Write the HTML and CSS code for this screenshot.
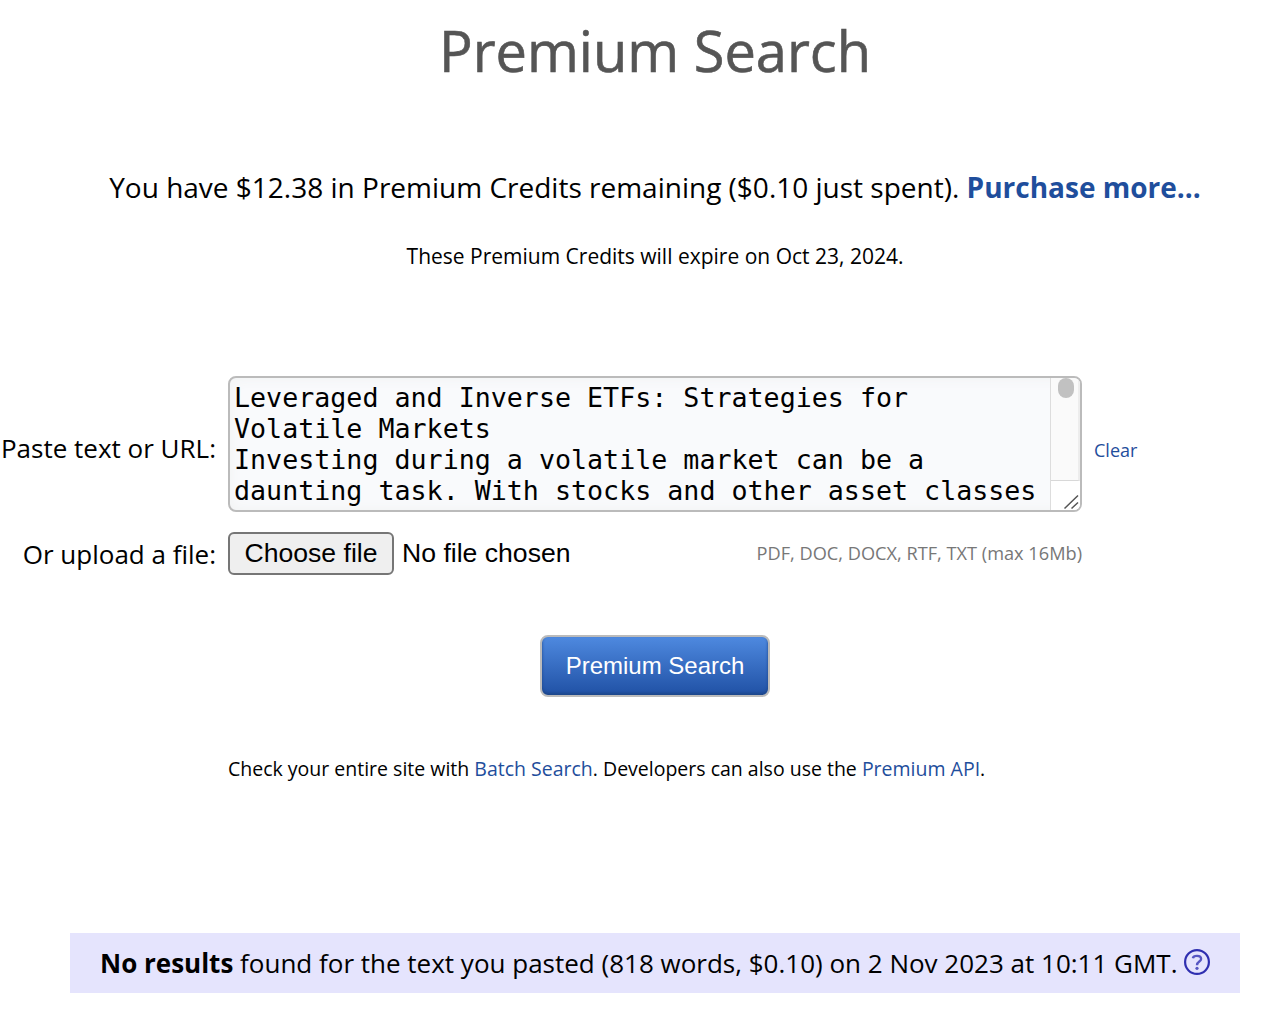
FILE: index.html
```html
<!DOCTYPE html>
<html lang="en">
<head>
<meta charset="utf-8">
<title>Premium Search</title>
<link rel="stylesheet" href="styles.css">
</head>
<body>
<main class="page">
  <h1 class="title"><span>Premium Search</span></h1>
  <p class="credits"><span>You have $12.38 in Premium Credits remaining ($0.10 just spent). <a class="more" href="#">Purchase more...</a></span></p>
  <p class="expiry"><span>These Premium Credits will expire on Oct 23, 2024.</span></p>
  <form class="form">
    <div class="label paste-label">Paste text or URL:</div>
    <div class="textbox">
      <div class="text">Leveraged and Inverse ETFs: Strategies for<br>Volatile Markets<br>Investing during a volatile market can be a<br>daunting task. With stocks and other asset classes</div>
      <div class="scroll">
        <div class="track"><div class="thumb"></div></div>
        <svg class="grip" width="29" height="29" viewBox="0 0 29 29"><path d="M13.5 27.500L27 14.500M20.500 27.500L27 21.500" fill="none" stroke="#555" stroke-width="1.500"/></svg>
      </div>
    </div>
    <a class="clear" href="#">Clear</a>
    <div class="label">Or upload a file:</div>
    <div class="upload">
      <button type="button" class="choose">Choose file</button>
      <span class="filename">No file chosen</span>
      <span class="formats">PDF, DOC, DOCX, RTF, TXT (max 16Mb)</span>
    </div>
  </form>
  <button type="button" class="search">Premium Search</button>
  <p class="hint">Check your entire site with <a href="#">Batch Search</a>. Developers can also use the <a href="#">Premium API</a>.</p>
  <div class="result">
    <span><b>No results</b> found for the text you pasted (818 words, $0.10) on 2 Nov 2023 at 10:11 GMT.</span>
    <svg class="help" width="26" height="26" viewBox="0 0 26 26" fill="none"><circle cx="13" cy="13" r="11.900" stroke="#2f2fb0" stroke-width="2.200"/><path d="M8.900 9.200C9.200 7.600 10.700 6.900 13 6.900C15.600 6.900 17.100 8 17.100 10C17.100 12.700 13 12.500 13 16.200" stroke="#5656c2" stroke-width="2.400"/><circle cx="13" cy="19.300" r="1.600" fill="#5656c2"/></svg>
  </div>
</main>
</body>
</html>
```
FILE: styles.css
```css
* { box-sizing: border-box; }
body {
  margin: 0;
  background: #fff;
  color: #000;
  font-family: "Open Sans", sans-serif;
  font-size: 26px;
  overflow: hidden;
}
a { color: #1f4e9c; text-decoration: none; }
p, h1 { margin: 0; white-space: nowrap; }
.page {
  width: 1264px;
  height: 1010px;
  padding-left: 46px;
  display: flex;
  flex-direction: column;
  align-items: center;
}
.title {
  margin-top: 10px;
  font-size: 56px;
  font-weight: 400;
  line-height: 80px;
  -webkit-text-stroke: 0.6px #555;
  color: #555;
}
.credits { margin-top: 77px; font-size: 28px; line-height: 40px; }
.more { font-weight: 700; }
.expiry { margin-top: 34px; font-size: 21px; line-height: 30px; }
.form {
  align-self: stretch;
  margin: 105px 0 0 -46px;
  display: grid;
  grid-template-columns: 216px 854px 1fr;
  grid-template-rows: 136px 43px;
  gap: 20px 12px;
  align-items: center;
}
.label { text-align: right; line-height: 36px; white-space: nowrap; }
.paste-label { padding-top: 8px; }
.textbox {
  height: 136px;
  display: flex;
  border: 2px solid #bbb;
  border-radius: 8px;
  background: #f9fafc;
  box-shadow: inset 0 0 14px #f0f2f2;
  overflow: hidden;
}
.text {
  flex: 1;
  padding: 4px;
  font: 26.670px/31px "DejaVu Sans Mono", monospace;
  white-space: nowrap;
}
.scroll {
  width: 30px;
  display: flex;
  flex-direction: column;
  border-left: 1px solid #ddd;
  background: #fafafa;
}
.track {
  flex: 1;
  border-right: 2px solid #ededed;
  border-bottom: 1px solid #d8d8d8;
}
.thumb { width: 16px; height: 20px; margin-left: 7px; border-radius: 8px; background: #c1c1c1; }
.grip { display: block; background: #fff; }
.clear { font-size: 18px; line-height: 26px; padding-top: 12px; }
.upload { display: flex; align-items: center; white-space: nowrap; }
.choose {
  width: 166px;
  height: 43px;
  padding: 0;
  border: 2px solid #767676;
  border-radius: 6px;
  background: #efefef;
  color: #000;
  font: 26.600px "Liberation Sans", Arial, sans-serif;
}
.filename { margin-left: 8px; font: 26.600px "Liberation Sans", Arial, sans-serif; }
.formats { margin-left: auto; padding-bottom: 2px; font-size: 18.200px; color: #777; }
.search {
  width: 230px;
  height: 62px;
  margin-top: 60px;
  padding: 0;
  border: 2px solid #bbb;
  border-radius: 8px;
  background: linear-gradient(#4e89df, #2051a5);
  box-shadow: inset 0 -2px 3px #1c4689;
  color: #fff;
  font: 24px "Liberation Sans", Arial, sans-serif;
}
.hint { align-self: flex-start; margin: 58px 0 0 182px; font-size: 19.500px; line-height: 28px; }
.result {
  width: 1170px;
  height: 60px;
  margin-top: 150px;
  padding-left: 30px;
  display: flex;
  align-items: center;
  gap: 6px;
  white-space: nowrap;
  background: #e5e4fd;
}
.help { flex: none; margin-bottom: 2px; }
```
